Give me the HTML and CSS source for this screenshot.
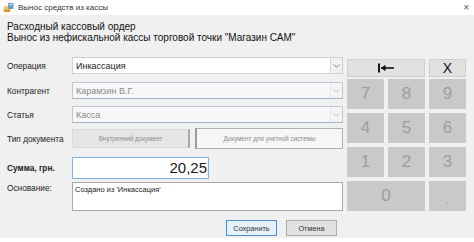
FILE: index.html
```html
<!DOCTYPE html>
<html lang="ru">
<head>
    <meta charset="UTF-8">
    <title>Вынос средств из кассы</title>
    <link rel="stylesheet" href="styles.css">
</head>
<body>
    <div class="titlebar">
        <svg class="app-icon" width="11" height="11" viewBox="0 0 11 11">
            <ellipse cx="4" cy="8.5" rx="3.5" ry="1.6" fill="#c98a2a"/>
            <ellipse cx="4" cy="7" rx="3.5" ry="1.6" fill="#e8b14a"/>
            <ellipse cx="4" cy="5.5" rx="3.5" ry="1.6" fill="#f2c660"/>
            <rect x="5" y="1" width="5.5" height="6" rx="1" fill="#6f9ad0"/>
            <rect x="6" y="2.2" width="3.5" height="1" fill="#dfeaf7"/>
        </svg>
        <span class="title">Вынос средств из кассы</span>
        <span class="close">✕</span>
    </div>
    <div class="window">
        <div class="header">
            <div>Расходный кассовый ордер</div>
            <div>Вынос из нефискальной кассы торговой точки "Магазин САМ"</div>
        </div>
        <div class="content">
            <div class="form">
                <div class="row row-op">
                    <label>Операция</label>
                    <div class="combo">
                        <span class="value">Инкассация</span>
                        <span class="arrow"><svg width="7" height="4" viewBox="0 0 7 4"><path d="M0.5 0.5 L3.5 3.2 L6.5 0.5" fill="none" stroke="#8a8a8a" stroke-width="1"/></svg></span>
                    </div>
                </div>
                <div class="row row-agent">
                    <label>Контрагент</label>
                    <div class="combo disabled">
                        <span class="value">Карамзин В.Г.</span>
                        <span class="arrow"><svg width="7" height="4" viewBox="0 0 7 4"><path d="M0.5 0.5 L3.5 3.2 L6.5 0.5" fill="none" stroke="#c4c4c4" stroke-width="1"/></svg></span>
                    </div>
                </div>
                <div class="row row-item">
                    <label>Статья</label>
                    <div class="combo disabled">
                        <span class="value">Касса</span>
                        <span class="arrow"><svg width="7" height="4" viewBox="0 0 7 4"><path d="M0.5 0.5 L3.5 3.2 L6.5 0.5" fill="none" stroke="#c4c4c4" stroke-width="1"/></svg></span>
                    </div>
                </div>
                <div class="row row-type">
                    <label>Тип документа</label>
                    <div class="toggles">
                        <button class="toggle">Внутренний документ</button>
                        <button class="toggle active">Документ для учетной системы</button>
                    </div>
                </div>
                <div class="row row-sum">
                    <label class="bold">Сумма, грн.</label>
                    <div class="sum">20,25</div>
                </div>
                <div class="row row-basis">
                    <label>Основание:</label>
                    <div class="memo">Создано из 'Инкассация'</div>
                </div>
                <div class="actions">
                    <button class="btn default">Сохранить</button>
                    <button class="btn">Отмена</button>
                </div>
            </div>
            <div class="keypad">
                <button class="key top wide">
                    <svg width="17" height="10" viewBox="0 0 17 10"><rect x="0" y="0.5" width="2" height="9" fill="#111"/><path d="M3 5 H16" stroke="#111" stroke-width="1.6"/><path d="M3 5 L7.5 1.8 L7.5 8.2 Z" fill="#111"/></svg>
                </button>
                <button class="key top clear">X</button>
                <button class="key">7</button>
                <button class="key">8</button>
                <button class="key">9</button>
                <button class="key">4</button>
                <button class="key">5</button>
                <button class="key">6</button>
                <button class="key">1</button>
                <button class="key">2</button>
                <button class="key">3</button>
                <button class="key wide">0</button>
                <button class="key comma">,</button>
            </div>
        </div>
    </div>
</body>
</html>
```

FILE: styles.css
```css
body {
    margin: 0;
    background-color: #ffffff;
    font-family: "Liberation Sans", Arial, sans-serif;
    color: #1a1a1a;
}
.titlebar {
    height: 15px;
    display: flex;
    align-items: center;
    padding-left: 3px;
    background-color: #ffffff;
}
.app-icon {
    margin-right: 4px;
}
.title {
    font-size: 8px;
    color: #333;
}
.close {
    margin-left: auto;
    margin-right: 4px;
    font-size: 8px;
    color: #666;
}
.window {
    background-color: #f0f0f0;
    height: 223px;
    padding: 6px 7px 0 7px;
    box-sizing: border-box;
}
.header {
    font-size: 10px;
    line-height: 11px;
    height: 36px;
    color: #111;
}
.content {
    display: flex;
    gap: 4px;
}
.form {
    width: 336px;
}
.row {
    display: flex;
    align-items: center;
}
.row label {
    width: 65px;
    font-size: 8.3px;
    color: #222;
    white-space: nowrap;
}
.row label.bold {
    font-weight: bold;
}
.combo {
    flex: 1;
    height: 17px;
    box-sizing: border-box;
    display: flex;
    align-items: center;
    background-color: #ffffff;
    border: 1px solid #d0d0d0;
    padding-left: 3px;
}
.combo .value {
    flex: 1;
    font-size: 9px;
}
.combo .arrow {
    width: 11px;
    height: 15px;
    display: flex;
    align-items: center;
    justify-content: center;
    background-color: #f0f0f0;
    border-left: 1px solid #d8d8d8;
}
.combo.disabled {
    background-color: #f7f7f7;
    border-color: #b8c8dc;
    border-bottom-color: #9fb4cf;
}
.combo.disabled .value {
    color: #8a8a8a;
}
.combo.disabled .arrow {
    background-color: #f4f4f4;
    border-left-color: #e2e2e2;
}
.row-agent {
    margin-top: 8px;
}
.row-item {
    margin-top: 7px;
}
.row-type {
    margin-top: 5px;
}
.toggles {
    flex: 1;
    display: flex;
    gap: 5px;
}
.toggle {
    height: 19px;
    margin-top: 1px;
    width: 118px;
    font-family: inherit;
    font-size: 6.3px;
    color: #8c8c8c;
    background-color: #e6e6e6;
    border: 1px solid #dadada;
    border-right: 2px solid #a8a8a8;
}
.toggle.active {
    width: auto;
    flex: 1;
    height: 21px;
    margin-top: 0;
    background-color: #f6f6f6;
    border: 1px solid #b0b0b0;
    border-left: 2px solid #9c9c9c;
}
.row-sum {
    margin-top: 8px;
}
.sum {
    width: 137px;
    height: 22px;
    box-sizing: border-box;
    background-color: #ffffff;
    border: 1px solid #7fb0e0;
    font-size: 15px;
    text-align: right;
    padding-right: 1px;
    line-height: 20px;
}
.row-basis {
    margin-top: 3px;
    align-items: flex-start;
}
.row-basis label {
    margin-top: 1px;
}
.memo {
    flex: 1;
    height: 29px;
    box-sizing: border-box;
    background-color: #ffffff;
    border: 1px solid #a8a8a8;
    font-size: 7.5px;
    padding: 2px 2px;
}
.actions {
    display: flex;
    justify-content: flex-end;
    gap: 9px;
    margin-top: 9px;
    padding-right: 6px;
}
.btn {
    width: 51px;
    height: 16px;
    font-family: inherit;
    font-size: 7.3px;
    color: #333;
    background-color: #e1e1e1;
    border: 1px solid #adadad;
}
.btn.default {
    border-color: #4a8ed8;
    background-color: #e5f1fb;
}
.keypad {
    margin-top: 2px;
    width: 119px;
    display: grid;
    grid-template-columns: 37px 37px 37px;
    grid-template-rows: 16px 30px 30px 30px 30px;
    column-gap: 4px;
    row-gap: 4px;
    align-content: start;
}
.key {
    border: none;
    padding: 0;
    background-color: #c9c9c9;
    color: #9d9d9d;
    font-family: inherit;
    font-size: 17px;
    display: flex;
    align-items: center;
    justify-content: center;
}
.key.wide {
    grid-column: span 2;
}
.key.top {
    background-color: #e1e1e1;
    border: 1px solid #cfcfcf;
    margin-bottom: -2px;
}
.key.clear {
    color: #111;
    font-size: 14px;
}
.key.comma {
    font-size: 9px;
    align-items: flex-end;
    padding-bottom: 6px;
}
```
